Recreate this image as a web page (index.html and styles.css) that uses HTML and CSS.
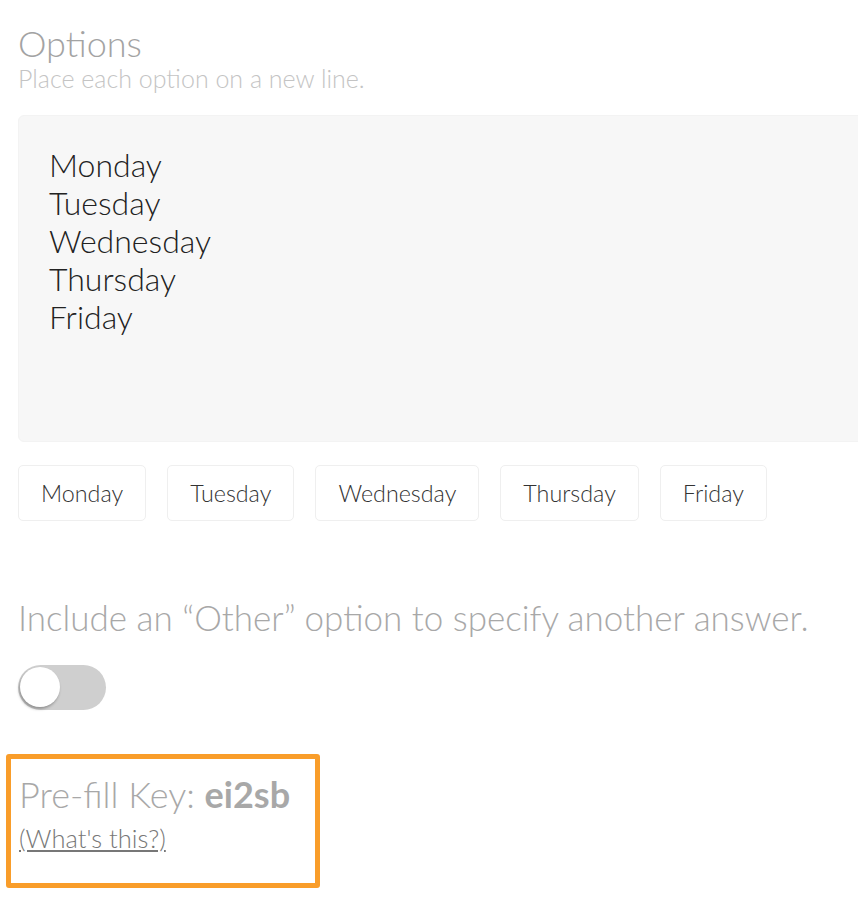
FILE: index.html
```html
<!DOCTYPE html>
<html>
<head>
<meta charset="utf-8">
<link rel="stylesheet" href="styles.css">
</head>
<body>
<div class="page">
  <h2 class="title">Options</h2>
  <p class="hint">Place each option on a new line.</p>
  <div class="textarea">
    <div>Monday</div>
    <div>Tuesday</div>
    <div>Wednesday</div>
    <div>Thursday</div>
    <div>Friday</div>
  </div>
  <div class="chips">
    <span class="chip">Monday</span>
    <span class="chip">Tuesday</span>
    <span class="chip">Wednesday</span>
    <span class="chip">Thursday</span>
    <span class="chip">Friday</span>
  </div>
  <p class="other">Include an “Other” option to specify another answer.</p>
  <div class="toggle"><span class="knob"></span></div>
  <div class="prefill">
    <div class="key">Pre-fill Key: <b>ei2sb</b></div>
    <a class="help" href="#">(What's this?)</a>
  </div>
</div>
</body>
</html>
```
FILE: styles.css
```css
html, body {
  margin: 0;
  padding: 0;
  background: #fff;
}
body {
  font-family: Lato, "Open Sans", sans-serif;
  font-weight: 300;
}
.page {
  padding: 24px 0 0 18px;
  overflow: hidden;
}
.title {
  margin: 0;
  font-size: 36px;
  line-height: 38px;
  font-weight: 300;
  color: #a3a3a3;
}
.hint {
  margin: 3px 0 0;
  font-size: 25px;
  line-height: 26px;
  color: #c4c4c4;
}
.textarea {
  margin-top: 24px;
  width: 860px;
  height: 327px;
  box-sizing: border-box;
  background: #f7f7f7;
  border: 1px solid #f3f3f3;
  border-radius: 6px;
  padding: 30px 30px;
  font-size: 32px;
  line-height: 38px;
  color: #222;
}
.chips {
  display: flex;
  gap: 21px;
  margin-top: 23px;
}
.chip {
  display: flex;
  align-items: center;
  height: 56px;
  box-sizing: border-box;
  padding: 0 22px;
  border: 1px solid #efefef;
  border-radius: 5px;
  font-size: 23.3px;
  color: #333;
}
.other {
  margin: 75px 0 0;
  font-size: 35px;
  line-height: 42px;
  color: #a8a8a8;
}
.toggle {
  margin-top: 27px;
  width: 88px;
  height: 45px;
  border-radius: 23px;
  background: #cfcfcf;
  position: relative;
}
.knob {
  position: absolute;
  left: 2px;
  top: 2px;
  width: 40px;
  height: 40px;
  border-radius: 50%;
  background: #fff;
  box-shadow: -1px 2px 3px rgba(0,0,0,0.3);
}
.prefill {
  margin: 44px 0 0 -12px;
  width: 314px;
  height: 134px;
  box-sizing: border-box;
  border: 5px solid #f99d2a;
  border-radius: 3px;
  padding: 15px 0 0 8px;
}
.key {
  font-size: 36px;
  line-height: 40px;
  color: #a8a8a8;
}
.key b {
  font-weight: 700;
}
.help {
  display: inline-block;
  margin-top: 10px;
  font-size: 25.5px;
  line-height: 28px;
  color: #777;
  text-decoration: underline;
}
```
